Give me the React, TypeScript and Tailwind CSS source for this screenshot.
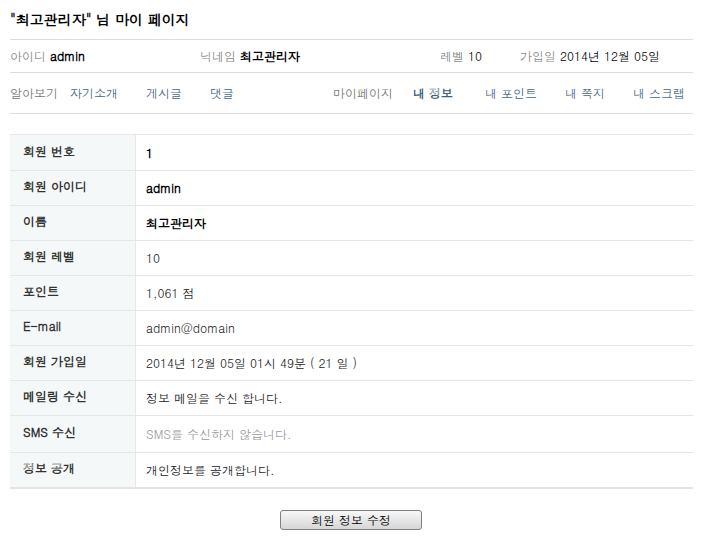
import React from "react";

const rows: { label: string; value: string; bold?: boolean; muted?: boolean; tall?: boolean }[] = [
  { label: "회원 번호", value: "1", bold: true },
  { label: "회원 아이디", value: "admin", bold: true },
  { label: "이름", value: "최고관리자", bold: true },
  { label: "회원 레벨", value: "10" },
  { label: "포인트", value: "1,061 점" },
  { label: "E-mail", value: "admin@domain" },
  { label: "회원 가입일", value: "2014년 12월 05일 01시 49분 ( 21 일 )" },
  { label: "메일링 수신", value: "정보 메일을 수신 합니다." },
  { label: "SMS 수신", value: "SMS를 수신하지 않습니다.", muted: true, tall: true },
  { label: "정보 공개", value: "개인정보를 공개합니다." },
];

const leftNav = ["자기소개", "게시글", "댓글"];
const rightNav = ["내 포인트", "내 쪽지", "내 스크랩"];

export default function App() {
  return (
    <div className="w-[711px] h-[538px] bg-white px-[10px] text-[12px] text-[#222] font-['Dotum','Noto_Sans_CJK_KR',sans-serif] leading-none">
      <div className="w-[683px]">
        {/* title */}
        <h1 className="h-[40px] flex items-center pb-[1px] text-[14px] font-bold text-black border-b border-[#dddddd]">
          "최고관리자" 님 마이 페이지
        </h1>

        {/* member summary */}
        <div className="h-[33px] flex items-center border-b border-[#dddddd]">
          <div className="w-[190px]">
            <span className="text-[#888]">아이디</span> <b className="text-black">admin</b>
          </div>
          <div className="w-[240px]">
            <span className="text-[#888]">닉네임</span> <b className="text-black">최고관리자</b>
          </div>
          <div className="w-[80px]">
            <span className="text-[#888]">레벨</span> <span className="text-black">10</span>
          </div>
          <div>
            <span className="text-[#888]">가입일</span> <span className="text-black">2014년 12월 05일</span>
          </div>
        </div>

        {/* navigation */}
        <div className="h-[41px] flex items-center border-b border-[#dddddd]">
          <span className="text-[#777] mr-[12px]">알아보기</span>
          {leftNav.map((n, i) => (
            <span key={n} className={`text-[#4a6986] ${i === 0 ? "w-[76px]" : "w-[64px]"}`}>
              {n}
            </span>
          ))}
          <div className="ml-auto flex items-center">
            <span className="text-[#777] w-[80px]">마이페이지</span>
            <span className="text-[#3f5f7d] font-bold w-[72px]">내 정보</span>
            {rightNav.map((n, i) => (
              <span key={n} className={`text-[#4a6986] ${i === 0 ? "w-[80px]" : i === 1 ? "w-[68px]" : ""}`}>
                {n}
              </span>
            ))}
            <span className="w-[8px]" />
          </div>
        </div>

        {/* info table */}
        <div className="mt-[20px] border-t border-[#e6e6e6] border-b-2 border-b-[#e3e3e3]">
          {rows.map((r, i) => (
            <div
              key={r.label}
              className={`flex ${r.tall ? "h-[37px]" : "h-[35px]"} ${i > 0 ? "border-t border-[#e6e6e6]" : ""}`}
            >
              <div className="w-[126px] shrink-0 bg-[#f5f8f8] border-r border-[#e6e6e6] pl-[13px] pb-[4px] flex items-center font-bold text-[#333]">
                {r.label}
              </div>
              <div
                className={`flex items-center pl-[10px] ${r.bold ? "font-bold text-black" : r.muted ? "text-[#999]" : "text-[#222]"}`}
              >
                {r.value}
              </div>
            </div>
          ))}
        </div>

        {/* edit button */}
        <div className="flex justify-center pt-[21px]">
          <button className="w-[142px] h-[20px] border border-[#808080] rounded-[3px] bg-gradient-to-b from-[#f8f8f8] to-[#d6d6d6] text-[12px] text-black font-['Dotum','Noto_Sans_CJK_KR',sans-serif] leading-none ml-[-1px]">
            회원 정보 수정
          </button>
        </div>
      </div>
    </div>
  );
}
